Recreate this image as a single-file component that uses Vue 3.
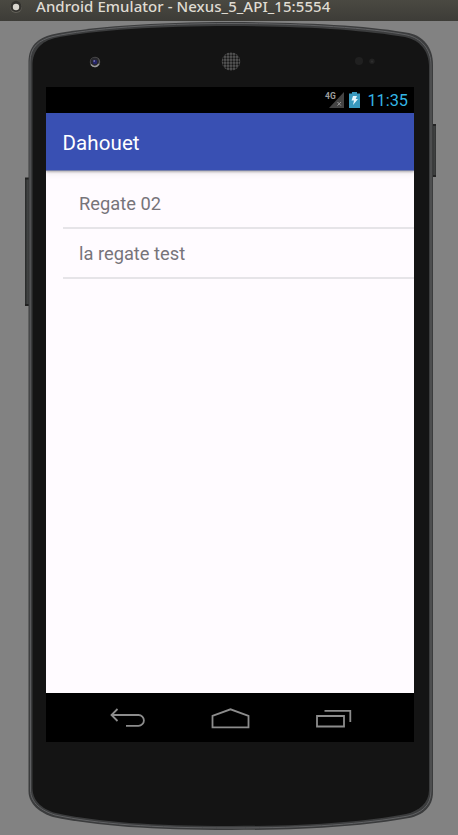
<script setup>
const races = ['Regate 02', 'la regate test']
</script>

<template>
  <div class="desktop">
    <header class="titlebar">
      <svg class="window-dot" width="14" height="14" viewBox="0 0 14 14">
        <circle cx="7" cy="7" r="6" fill="#626059" />
        <circle cx="7" cy="6.4" r="5.6" fill="#33322e" />
        <circle cx="7" cy="7" r="3.2" fill="#d8d5ce" />
      </svg>
      <span class="window-title">Android Emulator - Nexus_5_API_15:5554</span>
    </header>
    <main class="stage">
      <svg class="phone" width="458" height="814" viewBox="0 21 458 814">
        <defs>
          <linearGradient id="key" x1="0" x2="1" y1="0" y2="0">
            <stop offset="0" stop-color="#262727" />
            <stop offset=".55" stop-color="#424444" />
            <stop offset="1" stop-color="#303131" />
          </linearGradient>
          <pattern id="mesh" width="3" height="3" patternUnits="userSpaceOnUse">
            <rect width="3" height="3" fill="#5a5a5a" />
            <circle cx="1.5" cy="1.5" r="1.15" fill="#151515" />
          </pattern>
        </defs>
        <rect x="25" y="178" width="5" height="128" fill="url(#key)" />
        <path d="M25 178.500h4M25 305h4" stroke="#202020" stroke-width="2" />
        <rect x="432" y="124.500" width="4" height="52.500" fill="url(#key)" />
        <path d="M432 125h4M432 176h4" stroke="#242424" stroke-width="2" />
        <path d="M28.500 62C28.500 46 38 38 52 34.500C88 27 155 22 231 22C306 22 373 26 409 33C423 36 433 47 433 65V792C433 807 423 815 409 818C365 826 310 830 231 830C152 830 97 826 53 817C40 813 28.500 804 28.500 791Z" fill="#3b3c3d" />
        <path d="M30 62C30 47 39 40 53 36.500C90 28.500 155 23.500 231 23.500C306 23.500 371 28 407 35C421 38 431 49 431 65V791C431 806 421 813 408 816C364 824 310 828 231 828C152 828 97 824 55 815C42 811 30.500 803 30.500 790Z" fill="none" stroke="#606163" stroke-width="1" />
        <path d="M32.500 65C32.500 50 42 41 55 38C94 30 160 26 231 26C304 26 365 30 405 37C419 40 429 50 429 67V790C429 803 419 811 406 814C364 822 310 826 231 826C152 826 98 822 56 813C44 810 32.500 802 32.500 788Z" fill="#141414" />
        <circle cx="95" cy="62" r="5.200" fill="#555454" />
        <circle cx="94.700" cy="61.500" r="4.100" fill="#28282d" />
        <path d="M91 64.500Q95 69 99 64" fill="none" stroke="#9b9b9b" stroke-width="1.300" />
        <circle cx="95" cy="62" r="2.200" fill="#26256c" />
        <circle cx="94.200" cy="61" r=".8" fill="#9998cc" />
        <circle cx="231" cy="61.500" r="9.300" fill="url(#mesh)" />
        <circle cx="359" cy="61" r="4" fill="#202020" />
        <circle cx="372" cy="61.300" r="2.700" fill="#222" />
        <circle cx="372" cy="61.500" r="1" fill="#303030" />
      </svg>

      <section class="screen">
        <div class="statusbar">
          <svg class="signal" width="21" height="18" viewBox="0 0 21 18">
            <path d="M20 1V17H5Z" fill="#444" />
            <path d="M13.500 11l3.400 3.600M16.900 11l-3.400 3.600" stroke="#999" stroke-width="1" />
          </svg>
          <span class="network">4G</span>
          <svg class="battery" width="11" height="16" viewBox="0 0 11 16">
            <path d="M3 0h5v1.500h3V16H0V1.500h3Z" fill="#3898bd" />
            <path d="M4 4h4L6.700 7H9L4 13l1-4.500H2.500Z" fill="#e7f6fc" />
          </svg>
          <time class="clock">11:35</time>
        </div>
        <div class="appbar"><h1>Dahouet</h1></div>
        <ul class="list">
          <li v-for="race in races" :key="race"><span>{{ race }}</span></li>
        </ul>
        <nav class="navbar">
          <svg width="36" height="20" viewBox="0 0 36 20">
            <path d="M7.500 1L1.500 7L7.500 13M1.500 7H28.500A5.200 5.200 0 0 1 28.500 17.800H16" />
          </svg>
          <svg width="40" height="22" viewBox="0 0 40 22">
            <path d="M1.500 8.800L19.500 2.300L37.500 8.800V20.300H1.500Z" />
          </svg>
          <svg width="36" height="20" viewBox="0 0 36 20">
            <path d="M1 8H28V18.500H1ZM8.500 2.800H34.300V14" />
          </svg>
        </nav>
      </section>
    </main>
  </div>
</template>

<style>
body { margin: 0; }
</style>

<style scoped>
.desktop {
  width: 458px;
  height: 835px;
  overflow: hidden;
  background: #828282;
  display: flex;
  flex-direction: column;
}
.titlebar {
  height: 21px;
  flex: none;
  box-sizing: border-box;
  display: flex;
  padding-left: 9px;
  background: linear-gradient(#4a4942, #3d3c37);
  color: #dfdbd2;
  font: 500 15px/12px "Noto Sans", sans-serif;
}
.window-dot { flex: none; }
.window-title {
  display: block;
  height: 12px;
  margin-left: 13px;
  white-space: nowrap;
  letter-spacing: 0.055px;
}
.stage {
  position: relative;
  flex: 1;
  padding: 66px 44px 0 46px;
}
.phone { position: absolute; left: 0; top: 0; }
.screen {
  position: relative;
  width: 368px;
  height: 655px;
  display: flex;
  flex-direction: column;
  background: #fffbff;
  font-family: Roboto, sans-serif;
}
.statusbar {
  position: relative;
  height: 26px;
  box-sizing: border-box;
  flex: none;
  background: #000;
  display: flex;
  justify-content: flex-end;
  padding: 5px 6px 0 0;
}
.signal { margin: -1px 4px 0 0; }
.network {
  position: absolute;
  left: 279px;
  top: 5px;
  color: #9d9d9d;
  font: 700 8.5px/9px Roboto, sans-serif;
}
.battery { margin-right: 7px; }
.clock { color: #33b5e5; font-size: 16.3px; line-height: 18px; }
.appbar {
  position: relative;
  height: 57px;
  flex: none;
  background: #3950b3;
  border-bottom: 1px solid #7881ac;
  box-sizing: content-box;
  box-shadow: 0 1px 2px #0004, 0 3px 6px #0001;
  clip-path: inset(0 0 -10px 0);
  padding-left: 16.5px;
}
h1 {
  margin: 0;
  color: #fff;
  font-size: 20.5px;
  font-weight: 400;
  line-height: 60px;
  letter-spacing: 0.1px;
}
.list { flex: 1; margin: 0; padding: 8px 0 0 16.5px; list-style: none; }
li {
  height: 50px;
  box-sizing: border-box;
  border-bottom: 2px solid #e6e4e8;
  padding-left: 16.5px;
  color: #77747a;
  font-size: 18.3px;
  line-height: 50px;
}
.navbar {
  height: 49px;
  flex: none;
  background: #000;
  box-sizing: border-box;
  padding: 1px 62px 0 64px;
  display: flex;
  align-items: center;
  justify-content: space-between;
}
.navbar path { fill: none; stroke: #8c8c8c; stroke-width: 1.8; }
</style>
